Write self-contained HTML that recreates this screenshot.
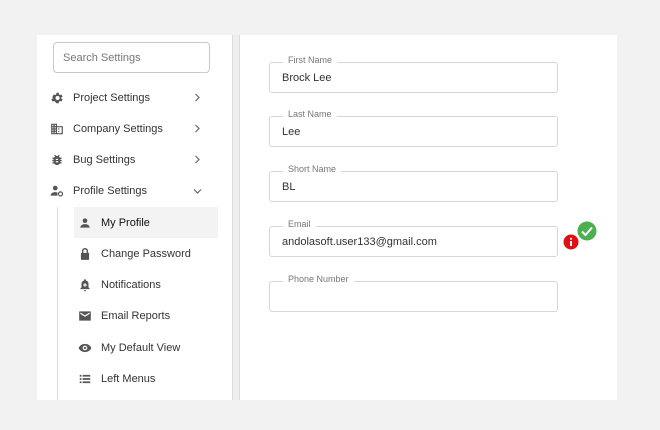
<!DOCTYPE html>
<html><head><style>
*{box-sizing:border-box;margin:0;padding:0}
body{width:660px;height:430px;background:#f2f2f2;font-family:"Liberation Sans",sans-serif;position:relative;overflow:hidden}
.card{position:absolute;left:37px;top:35px;width:580px;height:365px;background:#fff}
.div{position:absolute;left:232px;top:35px;width:8px;height:365px;background:#eeeeee;border-left:1px solid #dcdcdc;border-right:1px solid #dcdcdc}
.search{position:absolute;left:53px;top:42px;width:157px;height:31px;border:1px solid #c8c8c8;border-radius:4px;font-size:11px;color:#777;padding:9px 0 0 9px}
.item{position:absolute;left:50px;font-size:11px;color:#333;height:14px}
.item svg{position:absolute;left:0;top:0}
.item span{position:absolute;left:23px;top:1px;white-space:nowrap}
.chev{position:absolute;left:193px}
.vl{position:absolute;left:57px;top:207px;width:1px;height:193px;background:#ddd}
.sub{position:absolute;left:78px;font-size:11px;color:#333;height:14px}
.sub svg{position:absolute;left:0;top:0}
.sub span{position:absolute;left:23px;top:1px;white-space:nowrap}
.hl{position:absolute;left:74px;top:207px;width:144px;height:31px;background:#f3f3f3}
.f{position:absolute;left:269px;width:289px;height:31px;border:1px solid #d6d6d6;border-radius:3px;font-size:11px;color:#333;padding:9px 0 0 12px}
.f label{position:absolute;left:13px;top:-8px;background:#fff;padding:0 5px;font-size:9px;color:#777}
</style></head><body>
<div class="card"></div>
<div class="div"></div>
<div class="search">Search Settings</div>

<div class="item" style="top:91px"><svg width="14" height="14" viewBox="0 0 24 24"><path fill="#555" d="M19.4 13a7.5 7.5 0 000-2l2.1-1.6-2-3.5-2.5 1a7.6 7.6 0 00-1.7-1L15 3h-4l-.4 2.9a7.6 7.6 0 00-1.7 1l-2.5-1-2 3.5L4.5 11a7.5 7.5 0 000 2l-2.1 1.6 2 3.5 2.5-1a7.6 7.6 0 001.7 1L11 21h4l.4-2.9a7.6 7.6 0 001.7-1l2.5 1 2-3.5zM13 15.5a3.5 3.5 0 110-7 3.5 3.5 0 010 7z"/></svg><span>Project Settings</span></div>
<svg class="chev" style="top:93px" width="8" height="9" viewBox="0 0 8 9"><path d="M2.5 1l3.5 3.5L2.5 8" fill="none" stroke="#666" stroke-width="1.2"/></svg>
<div class="item" style="top:122px"><svg width="14" height="14" viewBox="0 0 24 24"><path fill="#555" d="M2 3h10v4h10v14H2zm2 2v2h2V5zm4 0v2h2V5zM4 9v2h2V9zm4 0v2h2V9zm-4 4v2h2v-2zm4 0v2h2v-2zm-4 4v2h2v-2zm4 0v2h2v-2zm4-8v10h8V9zm2 2h2v2h-2zm0 4h2v2h-2z"/></svg><span>Company Settings</span></div>
<svg class="chev" style="top:124px" width="8" height="9" viewBox="0 0 8 9"><path d="M2.5 1l3.5 3.5L2.5 8" fill="none" stroke="#666" stroke-width="1.2"/></svg>
<div class="item" style="top:153px"><svg width="14" height="14" viewBox="0 0 24 24"><path fill="#555" d="M20 8h-3a6 6 0 00-1.8-2l1.6-1.6-1.4-1.4L13.2 5.2a6 6 0 00-2.4 0L8.6 3 7.2 4.4 8.8 6A6 6 0 007 8H4v2h2.1a6 6 0 000 2H4v2h2.1a6 6 0 000 2H4v2h3a6 6 0 0010 0h3v-2h-2.1a6 6 0 000-2H20v-2h-2.1a6 6 0 000-2H20z"/><path fill="#fff" d="M10 10h4v2h-4zm0 4h4v2h-4z"/></svg><span>Bug Settings</span></div>
<svg class="chev" style="top:155px" width="8" height="9" viewBox="0 0 8 9"><path d="M2.5 1l3.5 3.5L2.5 8" fill="none" stroke="#666" stroke-width="1.2"/></svg>
<div class="item" style="top:184px"><svg width="14" height="14" viewBox="0 0 24 24"><circle cx="9" cy="7" r="4" fill="#555"/><path fill="#555" d="M1 20c0-4 4-6 8-6 1.5 0 2.8.3 3.8.7V20z"/><circle cx="18" cy="17" r="3.5" fill="none" stroke="#555" stroke-width="2"/></svg><span>Profile Settings</span></div>
<svg class="chev" style="top:187px;left:193px" width="9" height="8" viewBox="0 0 9 8"><path d="M1 2.5l3.5 3.5L8 2.5" fill="none" stroke="#666" stroke-width="1.2"/></svg>

<div class="vl"></div>
<div class="hl"></div>
<div class="sub" style="top:216px"><svg width="14" height="14" viewBox="0 0 24 24"><circle cx="12" cy="8" r="4" fill="#555"/><path fill="#555" d="M4 20c0-4 4-6 8-6s8 2 8 6z"/></svg><span style="color:#111">My Profile</span></div>
<div class="sub" style="top:247px"><svg width="14" height="14" viewBox="0 0 24 24"><path fill="none" stroke="#555" stroke-width="2.5" d="M8 10V7a4 4 0 018 0v3"/><rect x="5" y="10" width="14" height="12" rx="1" fill="#555"/></svg><span>Change Password</span></div>
<div class="sub" style="top:278px"><svg width="14" height="14" viewBox="0 0 24 24"><path fill="#555" d="M12 2a1.5 1.5 0 011.5 1.5v.7A6 6 0 0118 10v6l2 2v1H4v-1l2-2v-6a6 6 0 014.5-5.8v-.7A1.5 1.5 0 0112 2zm-2 19h4a2 2 0 01-4 0z"/><path fill="#fff" d="M11 9h2v2h2v2h-2v2h-2v-2H9v-2h2z"/></svg><span>Notifications</span></div>
<div class="sub" style="top:309px"><svg width="14" height="14" viewBox="0 0 24 24"><rect x="2" y="4" width="20" height="16" rx="1" fill="#555"/><path fill="none" stroke="#fff" stroke-width="2" d="M4 7l8 5 8-5"/></svg><span>Email Reports</span></div>
<div class="sub" style="top:341px"><svg width="14" height="14" viewBox="0 0 24 24"><path fill="#555" d="M12 5C7 5 3 8 1 12c2 4 6 7 11 7s9-3 11-7c-2-4-6-7-11-7zm0 11a4 4 0 110-8 4 4 0 010 8z"/><circle cx="12" cy="12" r="2" fill="#555"/></svg><span>My Default View</span></div>
<div class="sub" style="top:372px"><svg width="14" height="14" viewBox="0 0 24 24"><path fill="#555" d="M3 5h3v3H3zm5 0h13v3H8zM3 10.5h3v3H3zm5 0h13v3H8zM3 16h3v3H3zm5 0h13v3H8z"/></svg><span>Left Menus</span></div>

<div class="f" style="top:62px"><label>First Name</label>Brock Lee</div>
<div class="f" style="top:116px"><label>Last Name</label>Lee</div>
<div class="f" style="top:171px"><label>Short Name</label>BL</div>
<div class="f" style="top:226px"><label>Email</label>andolasoft.user133@gmail.com</div>
<div class="f" style="top:281px"><label>Phone Number</label></div>

<svg style="position:absolute;left:563px;top:234px" width="16" height="16" viewBox="0 0 16 16"><circle cx="8" cy="8" r="7.5" fill="#e01010"/><rect x="7" y="7" width="2" height="5" fill="#fff"/><circle cx="8" cy="4.8" r="1.1" fill="#fff"/></svg>
<svg style="position:absolute;left:577px;top:221px" width="20" height="20" viewBox="0 0 20 20"><circle cx="10" cy="10" r="9.5" fill="#4caf50"/><path d="M5 10.5l3.5 3.5L15 6.5" fill="none" stroke="#fff" stroke-width="2"/></svg>
</body></html>
